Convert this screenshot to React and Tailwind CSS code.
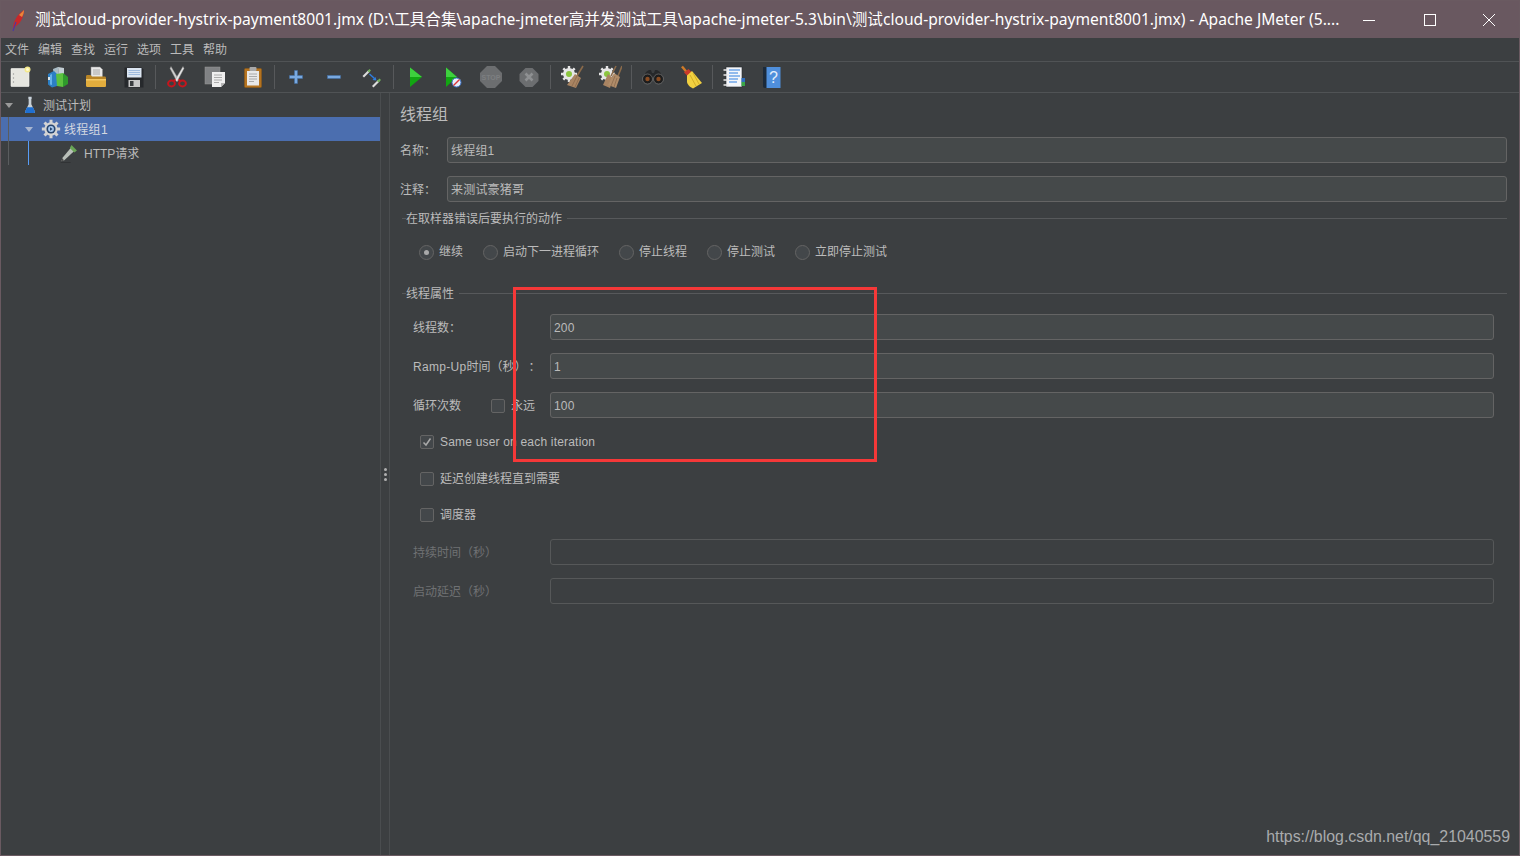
import React from "react";

const uiFont = "font-['Liberation_Sans','Noto_Sans_CJK_SC',sans-serif]";

function Svg({ size = 24, children, className = "" }) {
  return (
    <svg width={size} height={size} viewBox="0 0 24 24" className={className}>
      {children}
    </svg>
  );
}

const NewIcon = () => (
  <Svg>
    <rect x="3" y="3.5" width="18" height="18" rx="0.5" fill="#e6e6e0" stroke="#f7f7f3" strokeWidth="0.6" />
    <circle cx="5.5" cy="9" r="0.7" fill="#999" />
    <circle cx="5.5" cy="13" r="0.7" fill="#999" />
    <circle cx="5.5" cy="17" r="0.7" fill="#999" />
    <circle cx="19.5" cy="4.5" r="3" fill="#f4e98c" />
    <circle cx="19.5" cy="4.5" r="1.5" fill="#fffbd0" />
  </Svg>
);

const TemplatesIcon = () => (
  <Svg>
    <path d="M7 4l5-2 1 7-5 2z" fill="#a9bcc6" />
    <path d="M12 2l6 1v7l-5 1z" fill="#c3ced4" />
    <path d="M2 9l6-3 3 3v12l-5 1.500-4-3z" fill="#2c7fc4" />
    <path d="M4 10l2-1v11l-2-.5z" fill="#66b2e8" />
    <path d="M10 9l7-1v14l-6-1z" fill="#5cc23f" />
    <path d="M17 8l5 4v7l-5 3z" fill="#2f9a2c" />
    <path d="M2 12h2v3H2z" fill="#d8e6ee" />
  </Svg>
);

const OpenIcon = () => (
  <Svg>
    <path d="M7 2h9l2.500 2.500V13H7z" fill="#e8e8e8" stroke="#8c8c8c" strokeWidth="0.5" />
    <path d="M9 5h7M9 7h7M9 9h7" stroke="#9a9a9a" strokeWidth="0.8" />
    <path d="M2 11.500c0-1 .6-1.500 1.500-1.500h3l1.500 1.500h12.500c1 0 1.500.6 1.500 1.500v7c0 1-.6 1.500-1.500 1.500h-17c-1 0-1.500-.6-1.500-1.500z" fill="#b98526" />
    <path d="M2 14h20v6.500c0 1-.6 1.500-1.500 1.500h-17c-1 0-1.500-.6-1.500-1.500z" fill="#e2ad3d" />
    <path d="M2 14h20v1.500H2z" fill="#f2c765" />
  </Svg>
);

const SaveIcon = () => (
  <Svg>
    <path d="M2.500 2.500h17l2 2v18h-19z" fill="#26292c" />
    <rect x="5" y="3" width="14.500" height="9.500" fill="#dce6f2" />
    <path d="M6.500 5.500h11.500M6.500 7.500h11.500M6.500 9.500h11.500" stroke="#8fb0d8" strokeWidth="0.8" />
    <rect x="6.500" y="15" width="11.500" height="7" fill="#c9c9c9" />
    <rect x="8" y="16" width="3.500" height="5" fill="#3a3d40" />
  </Svg>
);

const CutIcon = () => (
  <Svg>
    <path d="M6 1.500l8 13.500-2 1.500L5 3.500z" fill="#cfcfcf" stroke="#8c8c8c" strokeWidth="0.4" />
    <path d="M18 1.500L10 15l2 1.500 7-13z" fill="#e4e4e4" stroke="#8c8c8c" strokeWidth="0.4" />
    <ellipse cx="6.500" cy="18.500" rx="3.400" ry="3" fill="none" stroke="#c5161d" strokeWidth="2" />
    <ellipse cx="17.500" cy="18.500" rx="3.400" ry="3" fill="none" stroke="#c5161d" strokeWidth="2" />
    <path d="M8.500 16l2-1.500M15.500 16l-2-1.500" stroke="#c5161d" strokeWidth="2" />
  </Svg>
);

const CopyIcon = () => (
  <Svg>
    <rect x="2" y="2" width="15" height="17" fill="#808284" stroke="#999" strokeWidth="0.5" />
    <path d="M9 7h13v11l-4 4H9z" fill="#efefef" />
    <path d="M18 22v-4h4z" fill="#b5b5b5" />
    <path d="M11 10h8M11 12.500h8M11 15h8M11 17.500h5" stroke="#999" strokeWidth="0.8" />
  </Svg>
);

const PasteIcon = () => (
  <Svg>
    <rect x="3.500" y="3.500" width="17" height="19" rx="1" fill="#b5731f" stroke="#8d5a18" strokeWidth="0.6" />
    <rect x="6" y="6" width="12" height="14.500" fill="#e8e8e8" />
    <rect x="8.500" y="2" width="7" height="4" rx="1" fill="#a8a8a8" />
    <path d="M8 9h8M8 11.500h8M8 14h8M8 16.500h5" stroke="#999" strokeWidth="0.8" />
  </Svg>
);

const PlusIcon = () => (
  <Svg>
    <path d="M10.500 5.500h3v5h5v3h-5v5h-3v-5h-5v-3h5z" fill="#79a9e0" stroke="#3f6ea8" strokeWidth="0.5" />
  </Svg>
);

const MinusIcon = () => (
  <Svg>
    <rect x="5.500" y="10.500" width="13" height="3" fill="#79a9e0" stroke="#3f6ea8" strokeWidth="0.5" />
  </Svg>
);

const ToggleIcon = () => (
  <Svg>
    <path d="M2.500 11l6-6 1.500 1.500-6 6z" fill="#dcdcdc" />
    <path d="M7.500 6l2-2 1.500 1.500-2 2z" fill="#6fb05a" />
    <path d="M12 21l6-6 1.500 1.500-6 6z" fill="#dcdcdc" />
    <path d="M17 16l2.500-2.500L21 15l-2.500 2.500z" fill="#6fb05a" />
    <path d="M9.500 9l5 4.500" stroke="#2f7fe0" strokeWidth="1.400" />
    <path d="M16.500 15.500l-4-.5 3-3z" fill="#2f7fe0" />
  </Svg>
);

const RunIcon = () => (
  <Svg>
    <path d="M7 2.500l12 9.500-12 10z" fill="#12a612" />
    <path d="M7 2.500L19 12H7z" fill="#3ed13e" />
  </Svg>
);

const RunNoPauseIcon = () => (
  <Svg>
    <path d="M5 2.500L16 12 5 22z" fill="#12a612" />
    <path d="M5 2.500L16 12H5z" fill="#3ed13e" />
    <circle cx="15.500" cy="17.500" r="4.500" fill="#e8eef8" stroke="#3c73c8" strokeWidth="1" />
    <path d="M12.500 20.500l6-6" stroke="#d9363a" strokeWidth="1.400" />
  </Svg>
);

const StopIcon = () => (
  <Svg>
    <path d="M8 1h8l7 7v8l-7 7H8l-7-7V8z" fill="#6c6e70" />
    <text x="12" y="15" textAnchor="middle" fontSize="7" fontWeight="700" fill="#7d7f81" fontFamily="Liberation Sans">STOP</text>
  </Svg>
);

const ShutdownIcon = () => (
  <Svg>
    <path d="M8.500 3h7l6 6v7l-6 6h-7l-6-6V9z" fill="#6c6e70" />
    <path d="M8.500 8.500l7 7M15.500 8.500l-7 7" stroke="#8e9092" strokeWidth="2.600" />
  </Svg>
);

const Gear = ({ fill = "#e6e6e6" }) => (
  <g>
    <circle cx="9" cy="9" r="6" fill={fill} />
    <path d="M9 1v16M1 9h16M3.300 3.300l11.400 11.400M14.700 3.300L3.300 14.700" stroke={fill} strokeWidth="2.400" />
    <circle cx="9" cy="9" r="3" fill="#8cc63f" />
  </g>
);

const ClearIcon = () => (
  <Svg>
    <Gear />
    <path d="M23 1l-6 10" stroke="#8a6a4a" strokeWidth="1.600" />
    <path d="M15 9l6 4-5 10-9-3z" fill="#a98462" />
    <path d="M12 21l5-10M15 22l4-9" stroke="#7e5f44" strokeWidth="0.6" />
  </Svg>
);

const ClearAllIcon = () => (
  <Svg>
    <Gear />
    <path d="M18 1l-5 10M24 1l-4 10" stroke="#8a6a4a" strokeWidth="1.600" />
    <path d="M10 9l5 4-3 10-7-3z" fill="#a98462" />
    <path d="M16 8l6 4-4 11-8-3z" fill="#b08c69" />
    <path d="M13 21l4-10M16 22l3-9" stroke="#7e5f44" strokeWidth="0.6" />
  </Svg>
);

const SearchIcon = () => (
  <Svg>
    <path d="M5 7l3-2h2l1 3h2l1-3h2l3 2 4 8H1z" fill="#26282a" />
    <circle cx="6.500" cy="14" r="5" fill="#1d1d1d" stroke="#888" strokeWidth="0.6" />
    <circle cx="17.500" cy="14" r="5" fill="#1d1d1d" stroke="#888" strokeWidth="0.6" />
    <circle cx="6.500" cy="14" r="2.200" fill="#8a4c22" />
    <circle cx="17.500" cy="14" r="2.200" fill="#8a4c22" />
  </Svg>
);

const BroomIcon = () => (
  <Svg>
    <path d="M3 1.500l5 6" stroke="#d07a28" strokeWidth="2.400" />
    <path d="M5 7.500l4.500-3.500 3 3-3.500 4.500z" fill="#c93a2a" />
    <path d="M8 10.500l5-4.500 10 12-9 5.500c-2-1-5.500-3-6-6.500z" fill="#f1d040" />
    <path d="M11 10l6 11M14 8l6 11" stroke="#c69d1d" strokeWidth="0.7" />
  </Svg>
);

const LogIcon = () => (
  <Svg>
    <rect x="4" y="2" width="16" height="20" fill="#f4f6fa" stroke="#26292c" strokeWidth="0.6" />
    <path d="M7 5h11M7 8h9M7 11h11M7 14h9M7 17h8" stroke="#2f7fe0" strokeWidth="1.200" />
    <path d="M1.500 5h5M1.500 10h5M1.500 15h5M1.500 20h5" stroke="#e8e8e8" strokeWidth="1.600" />
    <rect x="19.500" y="13" width="3.500" height="4" fill="#2f6fc0" />
    <rect x="19.500" y="17" width="3.500" height="4" fill="#3aa648" />
  </Svg>
);

const HelpIcon = () => (
  <Svg>
    <path d="M3 2h5v21H5c-1.500 0-2-1-2-2z" fill="#1c2a3a" />
    <rect x="6.500" y="2" width="14" height="21" fill="#4f8fdc" />
    <text x="13.500" y="18" textAnchor="middle" fontSize="16" fill="#e4eefa" fontFamily="Liberation Sans">?</text>
  </Svg>
);

const FlaskIcon = () => (
  <Svg size={20}>
    <rect x="9.800" y="1" width="4.400" height="3" fill="#c9d3dc" />
    <path d="M10.200 4h3.600v7l4.700 9.500c.5 1 0 2-1 2h-11c-1 0-1.500-1-1-2l4.700-9.500z" fill="#c8d0d6" />
    <path d="M8 15h8l2.500 5.500c.5 1 0 2-1 2h-11c-1 0-1.500-1-1-2z" fill="#1f6fd0" />
  </Svg>
);

const GearIcon = () => (
  <Svg size={20}>
    <circle cx="12" cy="12" r="8" fill="#d4d4d4" />
    <path d="M12 1v22M1 12h22M4.200 4.200l15.600 15.600M19.800 4.200L4.200 19.800" stroke="#d4d4d4" strokeWidth="3.600" />
    <circle cx="12" cy="12" r="5.500" fill="#27466f" />
    <circle cx="12" cy="12" r="3.500" fill="#a9c8ee" />
    <path d="M10.800 10l3.200 2-3.200 2z" fill="#27466f" />
  </Svg>
);

const PenIcon = () => (
  <Svg size={20}>
    <path d="M14 6l4 4L6 21l-3 1 1-4z" fill="#b9bfb9" />
    <path d="M15 2.500l6.500 6.500-3 2.500-5.500-5.500z" fill="#69a555" />
    <path d="M4 18l2 3-3 1z" fill="#4c4c4c" />
    <path d="M2 23.500h12" stroke="#2e3032" strokeWidth="1" />
  </Svg>
);

const FeatherIcon = () => (
  <svg width="16" height="24" viewBox="0 0 16 24" className="shrink-0">
    <path d="M3 21C3 14 7 6 14 2c0 6-3 13-8 16z" fill="#c8282a" />
    <path d="M9 7c2-2 4-4 5-5 0 3-1 5-2 7z" fill="#e8863a" />
    <path d="M3 23l3-9" stroke="#4a3aa0" strokeWidth="1.200" />
  </svg>
);

const tools = [
  [NewIcon, TemplatesIcon, OpenIcon, SaveIcon],
  [CutIcon, CopyIcon, PasteIcon],
  [PlusIcon, MinusIcon, ToggleIcon],
  [RunIcon, RunNoPauseIcon, StopIcon, ShutdownIcon],
  [ClearIcon, ClearAllIcon],
  [SearchIcon, BroomIcon],
  [LogIcon, HelpIcon],
];

const menus = ["文件", "编辑", "查找", "运行", "选项", "工具", "帮助"];

function Toolbar() {
  return (
    <div className="flex h-[31px] shrink-0 items-center border-b border-[#505355]">
      {tools.map((group, i) => (
        <React.Fragment key={i}>
          {i > 0 && (
            <div className="flex w-[5px] justify-center">
              <div className="h-[24px] w-px bg-[#57595b]" />
            </div>
          )}
          {group.map((Icon, j) => (
            <div key={j} className="flex w-[38px] justify-center">
              <Icon />
            </div>
          ))}
        </React.Fragment>
      ))}
    </div>
  );
}

function Tree() {
  return (
    <div className="w-[379px] shrink-0 text-[12px] leading-none">
      <div className="flex h-[24px] items-center">
        <span className="ml-[4px] h-0 w-0 border-x-[4px] border-t-[5px] border-x-transparent border-t-[#9a9a9a]" />
        <span className="ml-[8px] flex w-[18px] justify-center"><FlaskIcon /></span>
        <span className="ml-[4px] pt-[2px]">测试计划</span>
      </div>
      <div className="flex h-[24px] items-center bg-[#4b6eaf]">
        <span className="ml-[7px] h-full w-px bg-[#5a5d5f]" />
        <span className="ml-[16px] h-0 w-0 border-x-[4px] border-t-[5px] border-x-transparent border-t-[#a8b6d0]" />
        <span className="ml-[8px] flex w-[20px] justify-center"><GearIcon /></span>
        <span className="ml-[3px] pt-[2px] tracking-[0.3px] text-[#d4d8e0]">线程组1</span>
      </div>
      <div className="flex h-[24px] items-center">
        <span className="ml-[7px] h-full w-px bg-[#5a5d5f]" />
        <span className="ml-[19px] h-full w-px bg-[#589df6]" />
        <span className="ml-[30px] flex w-[20px] justify-center"><PenIcon /></span>
        <span className="ml-[5px] pt-[2px]">HTTP请求</span>
      </div>
    </div>
  );
}

function Divider() {
  return (
    <div className="flex w-[10px] shrink-0 flex-col items-center justify-center border-x border-[#4a4d4f]">
      <div className="flex flex-col gap-[2px]">
        <span className="size-[3px] rounded-full bg-[#b0b0b0]" />
        <span className="size-[3px] rounded-full bg-[#b0b0b0]" />
        <span className="size-[3px] rounded-full bg-[#b0b0b0]" />
      </div>
    </div>
  );
}

function Input({ value, disabled }) {
  return (
    <div
      className={`flex h-[26px] flex-1 items-center rounded-[3px] border px-[3px] pt-[2px] text-[12px] tracking-[0.2px] ${
        disabled ? "border-[#565859] bg-[#3c3f41]" : "border-[#646464] bg-[#45494a]"
      }`}
    >
      {value}
    </div>
  );
}

function Radio({ label, checked }) {
  return (
    <div className="flex items-center gap-[5px]">
      <span className="flex size-[15px] items-center justify-center rounded-full border border-[#646464] bg-[#43474a]">
        {checked && <span className="size-[5px] rounded-full bg-[#a9a9a9]" />}
      </span>
      <span>{label}</span>
    </div>
  );
}

function Check({ checked }) {
  return (
    <span className="flex size-[14px] shrink-0 items-center justify-center rounded-[2px] border border-[#646464] bg-[#43474a]">
      {checked && (
        <svg width="10" height="10" viewBox="0 0 10 10">
          <path d="M1.500 5.500L4 8l4.500-6.500" fill="none" stroke="#a9a9a9" strokeWidth="1.500" />
        </svg>
      )}
    </span>
  );
}

function CheckRow({ label, checked, className }) {
  return (
    <div className={`flex h-[20px] items-center gap-[6px] pl-[7px] ${className}`}>
      <Check checked={checked} />
      <span className={checked ? "tracking-[0.19px]" : ""}>{label}</span>
    </div>
  );
}

function GroupTitle({ children, className }) {
  return (
    <div className={`flex h-[16px] items-center ${className}`}>
      <span className="ml-[2px] h-px w-[4px] bg-[#57595b]" />
      <span className="pt-[2px]">{children}</span>
      <span className="ml-[5px] h-px flex-1 bg-[#57595b]" />
    </div>
  );
}

function Field({ label, value, disabled, className = "", children }) {
  return (
    <div className={`flex items-center ${className}`}>
      <div className={`flex w-[137px] shrink-0 items-center pt-[2px] ${disabled ? "text-[#6f7173]" : ""}`}>
        {label}
        {children}
      </div>
      <Input value={value} disabled={disabled} />
    </div>
  );
}

function Form() {
  return (
    <div className="min-w-0 flex-1 pl-[10px] pr-[12px] text-[12px] leading-none">
      <div className="flex h-[44px] items-start pt-[13px] text-[16px] leading-[18px]">线程组</div>
      <div className="flex items-center">
        <span className="w-[47px] shrink-0 pt-[2px]">名称：</span>
        <Input value="线程组1" />
      </div>
      <div className="mt-[13px] flex items-center">
        <span className="w-[47px] shrink-0 pt-[2px]">注释：</span>
        <Input value="来测试豪猪哥" />
      </div>

      <GroupTitle className="mt-[8px]">在取样器错误后要执行的动作</GroupTitle>
      <div className="mt-[16px] flex h-[20px] items-center gap-[20px] pl-[19px]">
        <Radio label="继续" checked />
        <Radio label="启动下一进程循环" />
        <Radio label="停止线程" />
        <Radio label="停止测试" />
        <Radio label="立即停止测试" />
      </div>

      <GroupTitle className="mt-[23px]">线程属性</GroupTitle>
      <div className="pl-[13px] pr-[13px]">
        <Field label="线程数：" value="200" className="mt-[13px]" />
        <Field
          label={
            <>
              <span className="tracking-[0.3px]">Ramp-Up</span>时间（秒）<span className="ml-[2px]">：</span>
            </>
          }
          value="1"
          className="mt-[13px]"
        />
        <Field label="循环次数" value="100" className="mt-[13px]">
          <span className="ml-[30px] flex items-center gap-[6px]">
            <Check />
            永远
          </span>
        </Field>
        <CheckRow label="Same user on each iteration" checked className="mt-[14px]" />
        <CheckRow label="延迟创建线程直到需要" className="mt-[17px]" />
        <CheckRow label="调度器" className="mt-[16px]" />
        <Field label="持续时间（秒）" disabled className="mt-[14px]" />
        <Field label="启动延迟（秒）" disabled className="mt-[13px]" />
      </div>
    </div>
  );
}

export default function App() {
  return (
    <div className={`relative flex h-[856px] w-[1520px] flex-col overflow-hidden border border-[#6a5a61] bg-[#3c3f41] text-[#bbbbbb] ${uiFont}`}>
      {/* title bar */}
      <div className="flex h-[37px] shrink-0 items-center bg-[#695860] text-white">
        <div className="ml-[9px] flex w-[25px]">
          <FeatherIcon />
        </div>
        <div className="w-[1306px] truncate font-['Noto_Sans','Noto_Sans_CJK_SC',sans-serif] text-[15.6px]">
          测试cloud-provider-hystrix-payment8001.jmx (D:\工具合集\apache-jmeter高并发测试工具\apache-jmeter-5.3\bin\测试cloud-provider-hystrix-payment8001.jmx) - Apache JMeter (5....
        </div>
        <div className="ml-auto flex items-center">
          <svg width="14" height="14" viewBox="0 0 14 14" className="mr-[47px]"><path d="M1 7.500h12" stroke="#fff" strokeWidth="1" /></svg>
          <svg width="14" height="14" viewBox="0 0 14 14" className="mr-[45px]"><rect x="1.500" y="1.500" width="11" height="11" fill="none" stroke="#fff" strokeWidth="1" /></svg>
          <svg width="14" height="14" viewBox="0 0 14 14" className="mr-[23px]"><path d="M1 1l12 12M13 1L1 13" stroke="#fff" strokeWidth="1" /></svg>
        </div>
      </div>

      {/* menu */}
      <div className="flex h-[24px] shrink-0 items-center gap-[9px] border-b border-[#505355] pl-[4px] text-[12px]">
        {menus.map((m) => (
          <span key={m}>{m}</span>
        ))}
      </div>

      <Toolbar />

      <div className="flex min-h-0 flex-1">
        <Tree />
        <Divider />
        <Form />
      </div>

      {/* annotation and watermark drawn over the shot */}
      <div className="pointer-events-none absolute left-[512px] top-[286px] h-[175px] w-[364px] border-[3px] border-[#f53838]" />
      <div className="absolute bottom-[8px] right-[9px] text-[15.9px] leading-[20px] text-[#a9abad]">
        https://blog.csdn.net/qq_21040559
      </div>
    </div>
  );
}
